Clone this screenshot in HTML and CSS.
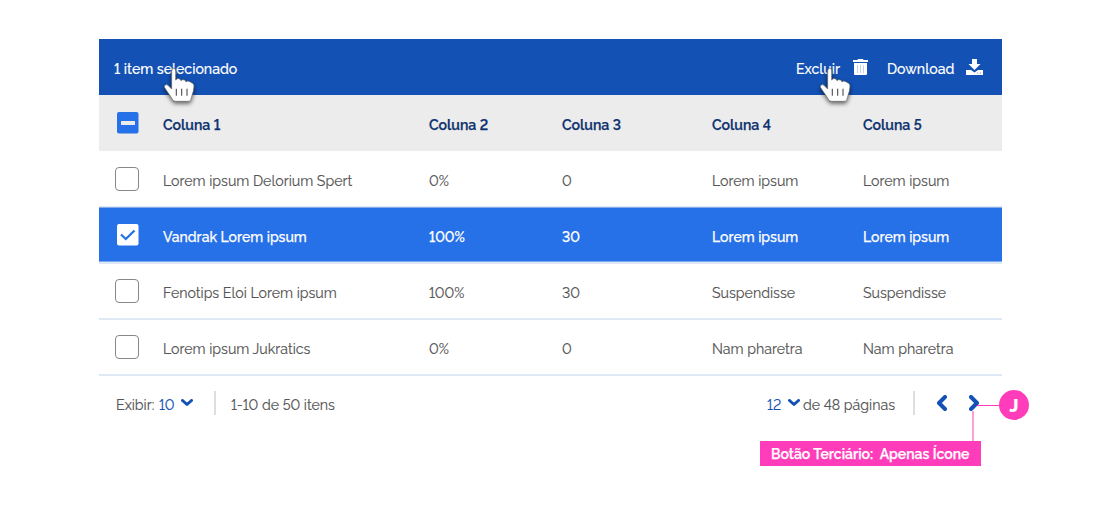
FILE: index.html
```html
<!DOCTYPE html>
<html lang="pt-BR">
<head>
<meta charset="utf-8">
<title>Tabela</title>
<link rel="stylesheet" href="styles.css">
</head>
<body>
<main class="table">
  <div class="toolbar">
    <span class="count">1 item selecionado</span>
    <span class="action excluir">Excluir</span>
    <svg class="trash" width="15" height="17" viewBox="0 0 15 17"><path fill="#fff" d="M0 1H4.5L5 0H10L10.5 1H15V3H0ZM1 4H14V15Q14 16 13 16H2Q1 16 1 15Z"/><path stroke="#c3d3ef" d="M4.500 6V14M7.500 6V14M10.500 6V14"/></svg>
    <span class="action download">Download</span>
    <svg class="down" width="17" height="16" viewBox="0 0 17 16"><path fill="#fff" d="M6 0H11V5H14.500L8.500 11L2.500 5H6ZM0 11H5L8.500 13.500L12 11H17V16H0Z"/><path fill="#6e94d5" d="M11 13.500h1v1h-1zM14 13.500h1v1h-1z"/></svg>
  </div>
  <div class="row head">
    <span class="check"><svg width="22" height="22" viewBox="0 0 22 22"><rect width="21.500" height="21.500" rx="2" fill="#2670e8"/><rect x="4" y="9" width="14" height="4" rx=".5" fill="#ececec"/></svg></span>
    <span>Coluna 1</span><span>Coluna 2</span><span>Coluna 3</span><span>Coluna 4</span><span>Coluna 5</span>
  </div>
  <div class="row">
    <span class="check"><i class="box"></i></span>
    <span>Lorem ipsum Delorium Spert</span><span>0%</span><span>0</span><span>Lorem ipsum</span><span>Lorem ipsum</span>
  </div>
  <div class="row selected">
    <span class="check"><svg width="22" height="22" viewBox="0 0 22 22"><rect width="21.500" height="21.500" rx="2" fill="#fff"/><path d="M4 10.500L8.800 15L17.500 6.500" fill="none" stroke="#2670e8" stroke-width="2.300"/></svg></span>
    <span>Vandrak Lorem ipsum</span><span>100%</span><span>30</span><span>Lorem ipsum</span><span>Lorem ipsum</span>
  </div>
  <div class="row">
    <span class="check"><i class="box"></i></span>
    <span>Fenotips Eloi Lorem ipsum</span><span>100%</span><span>30</span><span>Suspendisse</span><span>Suspendisse</span>
  </div>
  <div class="row">
    <span class="check"><i class="box"></i></span>
    <span>Lorem ipsum Jukratics</span><span>0%</span><span>0</span><span>Nam pharetra</span><span>Nam pharetra</span>
  </div>
  <div class="footer">
    <span class="exibir">Exibir:</span><span class="num ten">10</span>
    <svg class="caret" width="12" height="8" viewBox="0 0 12 8"><path d="M1.500 1.500L6 5.500L10.500 1.500"/></svg>
    <i class="divider left"></i>
    <span class="range">1-10 de 50 itens</span>
    <span class="num twelve">12</span>
    <svg class="caret second" width="12" height="8" viewBox="0 0 12 8"><path d="M1.500 1.500L6 5.500L10.500 1.500"/></svg>
    <span class="pages">de 48 páginas</span>
    <i class="divider right"></i>
    <svg class="chev prev" width="11" height="16" viewBox="0 0 11 16"><path d="M9 2L3 8L9 14"/></svg>
    <svg class="chev next" width="11" height="16" viewBox="0 0 11 16"><path d="M2 2L8 8L2 14"/></svg>
  </div>
</main>
<i class="line-h"></i><i class="line-v"></i>
<div class="badge">J</div>
<div class="note">Botão Terciário:&nbsp; Apenas Ícone</div>
<svg class="hand one" viewBox="0 0 150 150"><path d="M50 33Q50 25 56 25Q62 25 62 33V60Q66 54 72 56Q77 58 78 62Q82 57 88 60Q93 62 93 66Q98 61 104 65L113 70Q117 73 117 79Q116 94 110 110Q108 124 102 124H62Q55 124 52 118Q47 108 39 98L29 83Q26 77 31 75Q35 72 39 76L50 87Z"/><path class="grooves" d="M64 86V107M80 86V107M96 86V107"/></svg>
<svg class="hand two" viewBox="0 0 150 150"><path d="M50 33Q50 25 56 25Q62 25 62 33V60Q66 54 72 56Q77 58 78 62Q82 57 88 60Q93 62 93 66Q98 61 104 65L113 70Q117 73 117 79Q116 94 110 110Q108 124 102 124H62Q55 124 52 118Q47 108 39 98L29 83Q26 77 31 75Q35 72 39 76L50 87Z"/><path class="grooves" d="M64 86V107M80 86V107M96 86V107"/></svg>
</body>
</html>
```
FILE: styles.css
```css
body { margin: 0; background: #fff; color: #555; font: 14.18px/20px Raleway, Lato, sans-serif; font-variant-numeric: lining-nums; -webkit-text-stroke: .15px; white-space: nowrap; overflow: hidden; }
svg { display: block; flex: none; }
.table { width: 903px; margin: 39px 0 0 99px; }
.toolbar { display: flex; height: 56px; box-sizing: border-box; padding: 20px 19px 0 15px; background: #1351b4; color: #fff; font-size: 14.1px; font-weight: 500; }
.count { flex: 1; }
.excluir { width: 57px; }
.download { width: 79px; }
.trash { margin-right: 19px; }
.row { display: grid; grid-template-columns: 48px 266px 133px 150px 151px 1fr; height: 56px; box-sizing: border-box; padding-left: 16px; border-bottom: 2px solid #dfe9f6; }
.row > span { padding-top: 19px; }
.row > .check { padding-top: 15px; }
.head { margin-bottom: 1px; background: #ececec; border-color: #ececec; color: #0c326f; font-size: 14.1px; font-weight: 600; -webkit-text-stroke: .25px; }
.head > span { padding-top: 20px; }
.head > .check { padding: 17px 0 0 2px; }
.selected > .check { padding: 16px 0 0 2px; }
.selected { color: #fff; background: #2670e8; box-shadow: 0 -1px #86abe8, inset 0 -1px #7ba8f0; font-size: 14px; font-weight: 500; -webkit-text-stroke: .25px; }
.box { display: block; width: 22px; height: 22px; border: 1px solid #888; border-radius: 4px; }
.footer { display: flex; height: 48px; padding: 19px 0 0 17px; box-sizing: border-box; }
.num { color: #1351b4; }
.exibir { width: 43px; }
.ten { width: 22px; }
.caret, .chev { fill: none; stroke: #1351b4; stroke-width: 3; }
.caret { margin-top: 4px; stroke-linecap: round; stroke-linejoin: round; }
.divider { width: 2px; height: 24px; margin-top: -4px; background: #dedede; }
.left { margin-left: 21px; }
.range { width: 536px; margin-left: 15px; }
.twelve { width: 21px; }
.second { margin-right: 3px; }
.pages { width: 110px; }
.chev { stroke-width: 4; stroke-linecap: round; stroke-linejoin: round; }
.prev { margin-left: 21px; }
.next { margin-left: 22px; }
.line-h { position: absolute; left: 977px; top: 405px; width: 24px; height: 1px; background: #ff3dbb; }
.line-v { position: absolute; left: 972px; top: 411px; width: 2px; height: 31px; background: #ff9edc; }
.badge { position: absolute; left: 999px; top: 390px; width: 30px; height: 30px; border-radius: 50%; background: #ff3dbb; color: #fff; font-size: 18px; font-weight: 800; line-height: 31px; text-align: center; }
.note { position: absolute; left: 760px; top: 441px; width: 210px; height: 25px; padding-left: 11px; background: #ff3dbb; color: #fff; font-size: 14px; font-weight: 600; line-height: 26px; -webkit-text-stroke: .25px; }
.hand { position: absolute; top: 60px; width: 50px; height: 50px; overflow: visible; fill: #fff; stroke: #666; stroke-width: 2; filter: drop-shadow(0 2px 2px rgba(0, 0, 0, .6)); }
.grooves { stroke: #555; stroke-width: 3.5; }
.one { left: 155px; }
.two { left: 811px; }
```
